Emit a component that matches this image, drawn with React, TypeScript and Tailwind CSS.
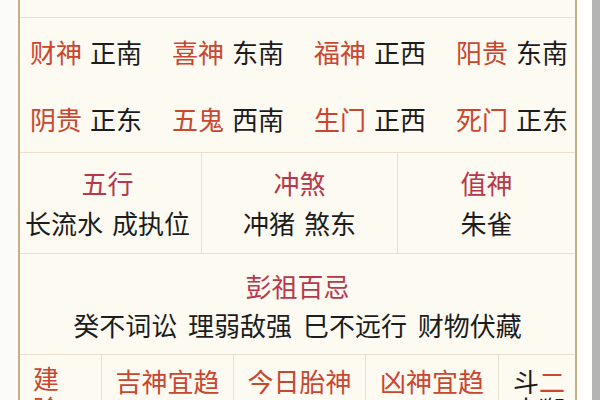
const dirs = [
  [
    ["财神", "正南"],
    ["喜神", "东南"],
    ["福神", "正西"],
    ["阳贵", "东南"],
  ],
  [
    ["阴贵", "正东"],
    ["五鬼", "西南"],
    ["生门", "正西"],
    ["死门", "正东"],
  ],
];

const font = "font-['Noto_Sans_CJK_SC','Noto_Sans',sans-serif]";

export default function App() {
  return (
    <div className={`w-[600px] h-[400px] overflow-hidden bg-white flex ${font}`}>
      <div className="w-[18px] shrink-0 bg-[#fbfbfa]" />
      <div className="w-[559px] shrink-0 h-full flex flex-col bg-[#fdfaf2] border-l-[2px] border-r-[2px] border-[#c9ad86]">
        <div className="h-[18px] shrink-0 border-b border-[#ebe0cc]" />

        <div className="h-[135px] shrink-0 flex flex-col border-b border-[#ebe0cc]">
          {dirs.map((row, i) => (
            <div key={i} className="h-[67px] flex items-center justify-center gap-[30px] pl-[3px]">
              {row.map(([k, v]) => (
                <div key={k} className="flex items-center text-[26px] leading-none">
                  <span className="text-[#c9462f]">{k}</span>
                  <span className="ml-[8px] text-[#1c1c1c]">{v}</span>
                </div>
              ))}
            </div>
          ))}
        </div>

        <div className="h-[101px] shrink-0 flex border-b border-[#ebe0cc] text-[26px] [word-spacing:3px]">
          <div className="w-[182px] flex flex-col items-center pt-[10px] pr-[6px] border-r border-[#ebe0cc] leading-[40px]">
            <span className="text-[#b8374a]">五行</span>
            <span className="text-[#1c1c1c] whitespace-nowrap">长流水 成执位</span>
          </div>
          <div className="w-[196px] flex flex-col items-center pt-[10px] border-r border-[#ebe0cc] leading-[40px]">
            <span className="text-[#b8374a]">冲煞</span>
            <span className="text-[#1c1c1c]">冲猪 煞东</span>
          </div>
          <div className="flex-1 flex flex-col items-center pt-[10px] leading-[40px]">
            <span className="text-[#b8374a]">值神</span>
            <span className="text-[#1c1c1c]">朱雀</span>
          </div>
        </div>

        <div className="h-[101px] shrink-0 flex flex-col items-center pt-[12px] border-b border-[#ebe0cc] text-[26px] leading-[39px] [word-spacing:5px]">
          <span className="text-[#b8374a]">彭祖百忌</span>
          <span className="text-[#1c1c1c] whitespace-nowrap">癸不词讼 理弱敌强 巳不远行 财物伏藏</span>
        </div>

        <div className="flex-1 flex text-[26px] leading-[28px] text-[#c9462f] overflow-hidden">
          <div className="w-[82px] border-r border-[#ebe0cc] pl-[13px] pt-[9px] flex flex-col">
            <span>建</span>
            <span className="mt-[2px]">除</span>
          </div>
          <div className="w-[132px] border-r border-[#ebe0cc] pt-[12px] text-center">吉神宜趋</div>
          <div className="w-[132px] border-r border-[#ebe0cc] pt-[12px] text-center">今日胎神</div>
          <div className="w-[133px] border-r border-[#ebe0cc] pt-[12px] text-center">凶神宜趋</div>
          <div className="flex-1 pt-[12px] pl-[14px] flex flex-col">
            <span>
              <span className="text-[#1c1c1c]">斗</span>二
            </span>
            <span className="text-[#1c1c1c]">木獬</span>
          </div>
        </div>
      </div>
      <div className="w-[15px] shrink-0 bg-white" />
      <div className="flex-1 bg-[#b4b4b4]" />
    </div>
  );
}
